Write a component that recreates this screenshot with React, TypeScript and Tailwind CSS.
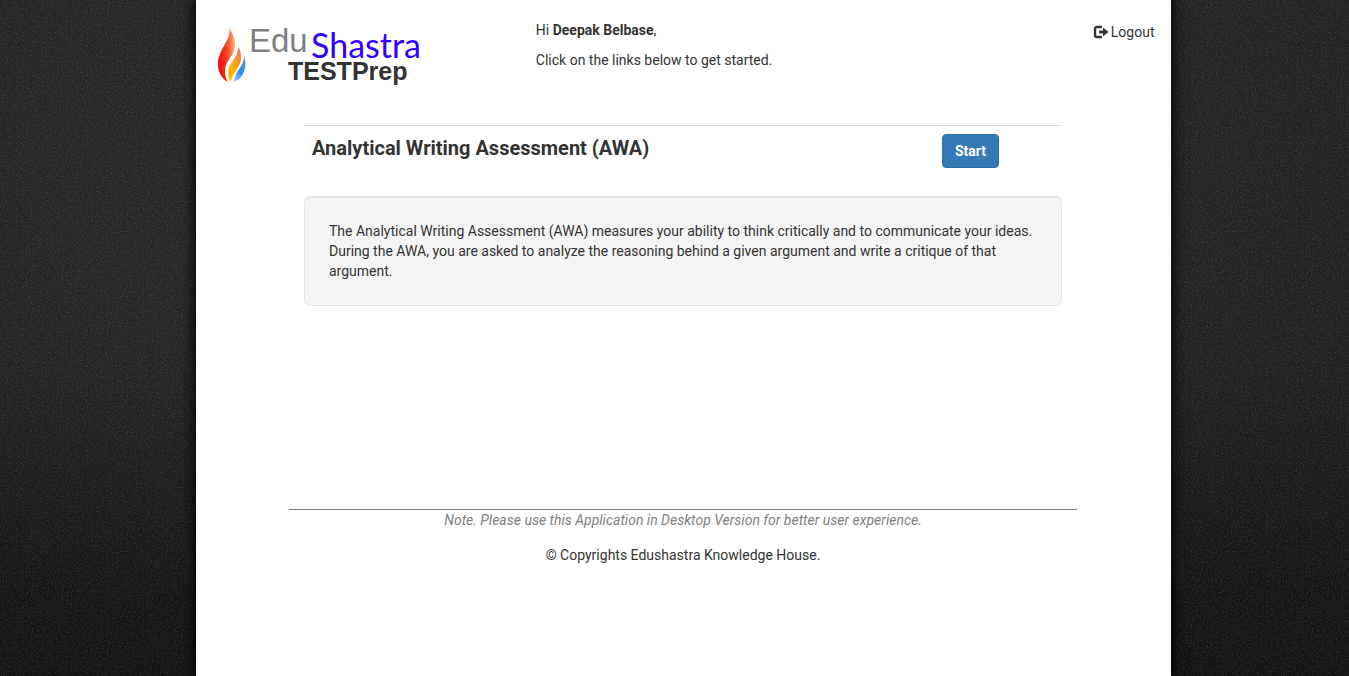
function Backdrop() {
  return (
    <div className="absolute inset-0 -z-10 overflow-hidden bg-linear-to-b from-[#262626] via-[#232323] via-55% to-[#151515]">
      <div className="absolute inset-0 bg-radial-[at_40%_35%] from-white/4 to-black/10" />
      <svg className="absolute inset-0 size-full opacity-10" aria-hidden="true">
        <filter id="grain" colorInterpolationFilters="sRGB">
          <feTurbulence type="fractalNoise" baseFrequency="0.8" numOctaves="2" seed="4" />
          <feColorMatrix type="matrix" values="0 0 0 0 1  0 0 0 0 1  0 0 0 0 1  3 0 0 0 -1.4" />
        </filter>
        <rect width="100%" height="100%" filter="url(#grain)" />
      </svg>
    </div>
  );
}

function Logo() {
  return (
    <svg width="216" height="72" viewBox="0 0 216 72" role="img" aria-label="EduShastra TESTPrep" className="shrink-0">
      <defs>
        <linearGradient id="flameRed" x1="0" y1="0.2" x2="1" y2="0">
          <stop offset="0" stopColor="#f50f0a" />
          <stop offset="0.45" stopColor="#f8411f" />
          <stop offset="1" stopColor="#fcc08a" />
        </linearGradient>
        <linearGradient id="flameGold" x1="0" y1="1" x2="0.6" y2="0">
          <stop offset="0" stopColor="#ffc400" />
          <stop offset="0.55" stopColor="#ffab14" />
          <stop offset="1" stopColor="#e3804a" />
        </linearGradient>
        <linearGradient id="flameBlue" x1="0" y1="1" x2="0.4" y2="0">
          <stop offset="0" stopColor="#a8d4ff" />
          <stop offset="0.5" stopColor="#2f8ef8" />
          <stop offset="1" stopColor="#4d86b8" />
        </linearGradient>
      </defs>
      <path d="M17 8C20 20 6 29 6 44C6 53 10 59 16 62C10 51 14 44 18 38C24 30 26 20 17 8Z" fill="url(#flameRed)" />
      <path d="M26 27C27 37 16 43 16 52C16 57 17 60 19 62C20 53 30 46 29 37C29 33 28 29 26 27Z" fill="url(#flameGold)" />
      <path d="M32 35C33 46 23 50 22 62C30 59 36 50 32 35Z" fill="url(#flameBlue)" />
      <text x="37" y="32" fontSize="33" fill="#808084" fontFamily="'Liberation Sans', Arial, sans-serif">Edu</text>
      <text x="99" y="38" fontSize="34" fill="#3300ff" fontFamily="Lato, 'Open Sans', sans-serif">Shastra</text>
      <text x="76" y="60" fontSize="25" fontWeight="700" fill="#333333" fontFamily="'Liberation Sans', Arial, sans-serif">TESTPrep</text>
    </svg>
  );
}

function LogoutIcon() {
  return (
    <svg width="16" height="14" viewBox="0 0 16 14" aria-hidden="true">
      <path d="M9 2H4Q2 2 2 4V10Q2 12 4 12H9" fill="none" stroke="currentColor" strokeWidth="2.4" />
      <path d="M6 5.5H10V2.5L15.5 7L10 11.5V8.5H6Z" fill="currentColor" />
    </svg>
  );
}

export default function App() {
  return (
    <div className="relative isolate flex min-h-screen justify-center pl-[17px] font-[Roboto,sans-serif] text-sm leading-5 text-[#333]">
      <Backdrop />
      <div className="flex w-full max-w-[975px] flex-col bg-white shadow-[0_0_12px_2px_#000]">
        <header className="flex items-start px-4 pt-5">
          <div className="w-1/3 shrink-0">
            <a href="#home" className="inline-block">
              <Logo />
            </a>
          </div>
          <div className="flex grow flex-col gap-2.5 pl-2.5">
            <p>
              Hi <strong className="font-bold">Deepak Belbase</strong>,
            </p>
            <p>Click on the links below to get started.</p>
          </div>
          <a href="#logout" className="mt-0.5 flex items-center gap-0.5">
            <LogoutIcon />
            Logout
          </a>
        </header>

        <main className="mx-auto mt-7 w-full max-w-[758px]">
          <section className="border-t border-[#ddd]">
            <div className="flex items-start justify-between pt-2 pr-[63px] pl-2">
              <h1 className="pt-0.5 text-xl leading-6 font-bold">Analytical Writing Assessment (AWA)</h1>
              <button
                type="button"
                className="rounded border border-[#2e6da4] bg-[#337ab7] px-3 py-1.5 font-bold text-white"
              >
                Start
              </button>
            </div>
            <p className="mt-7 rounded-md border border-[#e3e3e3] bg-[#f4f4f4] p-6 shadow-[inset_0_1px_1px_rgba(0,0,0,0.05)]">
              The Analytical Writing Assessment (AWA) measures your ability to think critically and to communicate your
              ideas. During the AWA, you are asked to analyze the reasoning behind a given argument and write a critique
              of that argument.
            </p>
          </section>
        </main>

        <footer className="mx-auto mt-[203px] w-full max-w-[788px] border-t border-[#808080] text-center">
          <p className="text-[#808080] italic">Note. Please use this Application in Desktop Version for better user experience.</p>
          <p className="mt-[15px]">© Copyrights Edushastra Knowledge House.</p>
        </footer>
      </div>
    </div>
  );
}
